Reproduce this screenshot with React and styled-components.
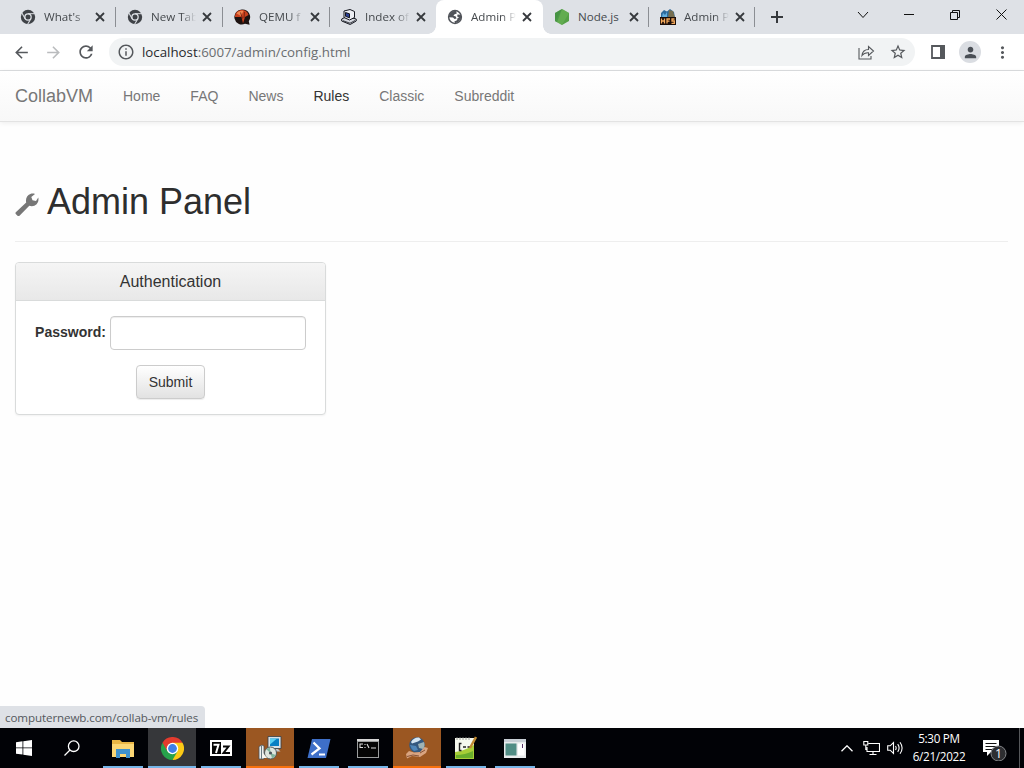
import React from 'react';
import styled, { createGlobalStyle, css } from 'styled-components';
import { MdArrowBack, MdArrowForward, MdRefresh, MdInfoOutline, MdStarBorder, MdPerson, MdMoreVert } from 'react-icons/md';

const Global = createGlobalStyle`
  *, *::before, *::after { box-sizing: border-box; }
  body { margin: 0; background: #fff; overflow: hidden; }
  svg { display: block; flex: none; }
`;

const uiFont = css`font-family: 'Open Sans', 'Noto Sans', sans-serif;`;
const pageFont = css`font-family: 'Liberation Sans', Arial, sans-serif;`;

const Screen = styled.div`
  width: 1024px; height: 768px;
  display: flex; flex-direction: column;
  overflow: hidden;
`;

/* Browser chrome */
const TabStrip = styled.div`
  height: 34px; flex: none;
  display: flex; align-items: stretch;
  padding-left: 9px;
  background: #dee1e6;
  color: #45494d;
`;
const Tab = styled.div`
  position: relative;
  width: ${p => p.$w}px; flex: none;
  display: flex; align-items: center;
  padding-left: 11px;
  ${uiFont}
  font-size: 12px;
  ${p => p.$active && css`
    background: #fff;
    border-radius: 8px 8px 0 0;
    &::before, &::after {
      content: ''; position: absolute; bottom: 0; width: 8px; height: 8px;
    }
    &::before { left: -8px; background: radial-gradient(circle at 0 0, transparent 7.5px, #fff 8px); }
    &::after { right: -8px; background: radial-gradient(circle at 100% 0, transparent 7.5px, #fff 8px); }
  `}
`;
const TabTitle = styled.span`
  width: 46px; margin-left: 8px;
  white-space: nowrap;
  line-height: 18px;
  font-size: 11.6px;
  mask-image: ${p => (p.$full ? 'none' : 'linear-gradient(90deg, #000 66%, transparent 98%)')};
`;
const TabClose = styled.span`
  margin-left: 2px; width: 16px;
  display: flex; justify-content: center;
`;
const Separator = styled.i`
  margin-left: auto;
  width: 1px; height: 20px;
  background: #8b8e93;
`;
const NewTab = styled.div`
  width: 28px; margin-left: 8px; margin-right: auto;
  display: flex; align-items: center; justify-content: center;
`;
const WindowButton = styled.div`
  width: 46px; height: 29px;
  display: flex; align-items: center; justify-content: center;
  color: #111;
`;

const Toolbar = styled.div`
  height: 37px; flex: none;
  display: flex; align-items: center;
  padding: 0 11px 0 12px;
  background: #fff;
  border-bottom: 1px solid #dcdee0;
  color: #55585c;
`;
const ToolIcon = styled.span`
  width: ${p => p.$w || 32}px;
  display: flex;
  justify-content: ${p => (p.$center ? 'center' : 'flex-start')};
  color: ${p => p.$color || 'inherit'};
`;
const Omnibox = styled.div`
  width: 806px; height: 28px; margin-left: 1px;
  display: flex; align-items: center;
  padding: 0 8px;
  border-radius: 14px;
  background: #f1f3f4;
`;
const Url = styled.span`
  flex: 1; margin-left: 7px;
  ${uiFont}
  font-size: 13.3px; line-height: 20px;
  color: #6a6d70;
  b { font-weight: 400; color: #27292c; }
`;
const Avatar = styled.span`
  width: 22px; height: 22px; border-radius: 50%;
  display: flex; align-items: center; justify-content: center;
  background: #dadde2; color: #4a4f56;
  margin-left: -1px; margin-right: 12px;
`;

/* Web page */
const Page = styled.div`
  flex: 1; min-height: 0;
  display: flex; flex-direction: column;
  ${pageFont}
  font-size: 14px; line-height: 20px; color: #333;
  background: #fefefe;
`;
const Navbar = styled.nav`
  height: 51px; flex: none;
  display: flex; align-items: center;
  padding: 0 0 1px 15px;
  background: linear-gradient(#fff, #f8f8f8);
  border-bottom: 1px solid #e3e3e3;
  box-shadow: 0 1px 5px rgba(0, 0, 0, .075);
`;
const Brand = styled.a`
  width: 78px; margin-right: 15px;
  font-size: 18px; color: #777;
  white-space: nowrap;
`;
const NavLink = styled.a`
  padding: 0 15px;
  color: ${p => (p.$hover ? '#333' : '#777')};
`;
const Content = styled.main`
  flex: 1;
  padding: 60px 16px 0 15px;
`;
const PageHeader = styled.header`
  display: flex; align-items: flex-start;
  height: 60px;
  border-bottom: 1px solid #eee;
`;
const Title = styled.h1`
  margin: 0 0 0 8px;
  font-size: 36px; line-height: 40px; font-weight: 400; color: #2e2e2e;
`;
const WrenchBox = styled.span`
  padding-top: 10px; color: #777;
`;
const Panel = styled.section`
  width: 311px; height: 153px; margin-top: 20px;
  border: 1px solid #d9dbdb; border-radius: 4px;
  background: #fff;
  box-shadow: 0 1px 2px rgba(0, 0, 0, .05);
`;
const PanelHeading = styled.h3`
  margin: 0; height: 38px;
  font-size: 16px; line-height: 37px; font-weight: 400; text-align: center;
  background: linear-gradient(#f5f5f5, #e8e8e8);
  border-bottom: 1px solid #d9dbdb;
  border-radius: 3px 3px 0 0;
`;
const Form = styled.form`
  display: flex; flex-direction: column; align-items: center; gap: 15px;
  padding-top: 15px;
`;
const Field = styled.label`
  display: flex; align-items: flex-start; gap: 4px;
  font-weight: 700; line-height: 32px;
`;
const Input = styled.input`
  width: 196px; height: 34px;
  border: 1px solid #ccc; border-radius: 4px;
  background: #fff;
  box-shadow: inset 0 1px 1px rgba(0, 0, 0, .075);
`;
const Submit = styled.button`
  width: 69px; height: 34px; padding: 0 0 1px;
  ${pageFont}
  font-size: 14px; color: #333;
  border: 1px solid #ccc; border-radius: 4px;
  background: linear-gradient(#fff, #e2e2e2);
  box-shadow: inset 0 1px 0 rgba(255, 255, 255, .15), 0 1px 1px rgba(0, 0, 0, .075);
`;
const StatusBubble = styled.div`
  width: 205px; height: 22px; padding-left: 5px;
  ${uiFont}
  font-size: 11.6px; line-height: 23px; color: #54585c;
  letter-spacing: -0.1px;
  white-space: nowrap;
  background: #dee1e6;
  border-radius: 0 4px 0 0;
`;

/* Taskbar */
const Taskbar = styled.footer`
  height: 40px; flex: none;
  display: flex;
  background: #010206;
  color: #fff;
`;
const SystemButton = styled.div`
  width: 48px;
  display: flex; align-items: center; justify-content: center;
`;
const Apps = styled.div`
  display: flex; gap: 1px;
  margin-left: 3px; margin-right: auto;
`;
const AppButton = styled.div`
  width: 48px;
  display: flex; align-items: center; justify-content: center;
  background:
    linear-gradient(${p => (p.$tone === 'alert' ? '#f8700c, #f8700c' : '#76b5e8, #76b5e8')})
    bottom / ${p => (p.$tone ? '48px' : '40px')} 2px no-repeat,
    ${p => ({ alert: '#9b5722', active: '#36373a' }[p.$tone] || 'transparent')};
`;
const TrayItem = styled.div`
  width: 24px;
  display: flex; align-items: center; justify-content: center;
`;
const Clock = styled.div`
  width: 64px; padding-top: 1px;
  ${uiFont}
  font-size: 11.7px; line-height: 18px; text-align: center;
  letter-spacing: -0.3px;
  white-space: nowrap;
`;
const Notifications = styled.div`
  width: 49px; padding-left: 11px;
  display: flex; align-items: center;
  border-right: 1px solid #55575a;
  margin-right: 4px;
`;

const XIcon = () => (
  <svg width="10" height="10" viewBox="0 0 10 10" stroke="#36393d" strokeWidth="1.8"><path d="M1 1l8 8M9 1l-8 8" /></svg>
);

const Wrench = () => (
  <svg width="24" height="24" viewBox="0 0 24 24" fill="currentColor">
    <path d="M.8 20.200L11.200 10.400C10.300 6.800 12 3.300 15.300 2c1.700-.7 3.400-.6 4.700-.1L16.300 5l1.200 3.300 3.500.6 2.300-3.300c.5 2.600-.1 5-1.700 6.600-2 1.900-4.700 2.400-7.300 1.500L4.500 23.800c-.6.6-1.400.6-2 0L.8 22c-.5-.5-.5-1.300 0-1.800z" />
  </svg>
);

const DarkChrome = () => (
  <svg width="16" height="16" viewBox="0 0 16 16">
    <circle cx="8" cy="8" r="7.200" fill="#3f4247" />
    <circle cx="8" cy="8" r="3.800" fill="#dee1e6" />
    <circle cx="8" cy="8" r="2.500" fill="#3f4247" />
    <g stroke="#dee1e6" strokeWidth="1">
      <path d="M8 4.700h7" /><path d="M8 4.700h7" transform="rotate(120 8 8)" /><path d="M8 4.700h7" transform="rotate(240 8 8)" />
    </g>
  </svg>
);
const GlobeTab = () => (
  <svg width="16" height="16" viewBox="0 0 16 16">
    <circle cx="8" cy="8" r="6.400" fill="#fff" stroke="#505359" strokeWidth="1.500" />
    <path d="M9 1.800C5 1.500 2 4.500 1.800 8.200L6 8.600l1.500 1.300 2-.4L8.800 7.600 6.400 6.800 7.600 5.200l2.200-.6z" fill="#505359" />
    <path d="M10.500 5.500l3.500.2.300 3.300-2.800 3.800-3.200 1.500-1-1.800 2.700-1.300.6-2.200 1.600-.6-2-1z" fill="#505359" />
  </svg>
);
const QemuIcon = () => (
  <svg width="17" height="16" viewBox="0 0 17 16">
    <path d="M8 .5a7.500 7.500 0 1 0 3 14.300l4.600 1-.8-3.600A7.500 7.500 0 0 0 8 .5z" fill="#1d1210" />
    <path d="M1 8C.8 3.500 4.300 1 8 1c3.600 0 6 2.300 6.500 5L11 8l-2 6.500L7.500 8z" fill="#c8401d" />
    <path d="M2.500 4.500C4 2 7 1.300 9.500 2L7 7z" fill="#f0854f" />
    <path d="M6.500 3.500l2 6M10.500 3l-.5 6" stroke="#6a1e10" strokeWidth=".8" />
  </svg>
);
const ComputerIcon = () => (
  <svg width="16" height="16" viewBox="0 0 16 16" stroke="#14161e" strokeLinejoin="round">
    <path d="M.7 10l5-2.500 9.500 2.500v2l-6 3.500-8.500-3.500z" fill="#d7dae2" />
    <path d="M3 2l6-1.500 4.500 2v6l-5 2.500L3 8.500z" fill="#eceef3" />
    <path d="M4.500 3.500l4 1.300v4l-4-1.500z" fill="#2b3f94" />
    <path d="M2 11.700l7 2.500 5-2.700" fill="none" strokeWidth=".8" />
  </svg>
);
const NodeIcon = () => (
  <svg width="16" height="16" viewBox="0 0 16 16">
    <path d="M8 0l7 4v8l-7 4-7-4V4z" fill="#54a045" />
    <path d="M8 0l7 4-7 12-7-4z" fill="#6db75a" opacity=".55" />
    <path d="M8 0L1 4v8l2 1.200z" fill="#3d8a42" opacity=".6" />
  </svg>
);
const HfsIcon = () => (
  <svg width="16" height="16" viewBox="0 0 16 16">
    <path d="M1 9V4l3-3 3 1.500L10 0l4 3 1 6z" fill="#2d6a9c" />
    <path d="M9 1l4 1 2 7H8z" fill="#766e4f" /><path d="M3 4l2 2 2-3v5H2z" fill="#63aede" />
    <path d="M0 8h16v8H0z" fill="#1b0d08" />
    <path d="M1.500 9.500v5M4.500 9.500v5M1.500 12h3M7 14.500v-4.500h3M7 12.200h2.500M14.500 10h-2.500v2h2.300v2.300h-2.800" fill="none" stroke="#f7ab5c" strokeWidth="1.300" />
  </svg>
);

const tabs = [
  { title: "What's", icon: <DarkChrome />, w: 107 },
  { title: 'New Tab', icon: <DarkChrome />, w: 107 },
  { title: 'QEMU f', icon: <QemuIcon />, w: 107 },
  { title: 'Index of', icon: <ComputerIcon />, w: 106 },
  { title: 'Admin P', icon: <GlobeTab />, active: true, w: 107 },
  { title: 'Node.js', icon: <NodeIcon />, full: true, w: 106 },
  { title: 'Admin P', icon: <HfsIcon />, w: 106 },
];

const Folder = () => (
  <svg width="22" height="19" viewBox="0 0 22 19">
    <path d="M0 1h8l2 2h12v15H0z" fill="#e9b746" /><path d="M0 5h22v13H0z" fill="#fbd775" />
    <path d="M4 10h14v9h-4v-4H8v4H4z" fill="#3f92cd" />
  </svg>
);
const ChromeColor = () => (
  <svg width="23" height="23" viewBox="0 0 24 24">
    <path d="M12 12L1.600 6A12 12 0 0 1 22.400 6z" fill="#e33b2e" />
    <path d="M12 12L22.400 6A12 12 0 0 1 12 24z" fill="#fbc916" />
    <path d="M12 12v12A12 12 0 0 1 1.600 6z" fill="#27a24b" />
    <path d="M12 6h10.400l-5.200 9z" fill="#fbc916" /><path d="M17.200 15L12 24l-5.200-9z" fill="#27a24b" /><path d="M1.600 6L6.800 15 12 6z" fill="#e33b2e" />
    <circle cx="12" cy="12" r="6" fill="#fff" /><circle cx="12" cy="12" r="4.600" fill="#3f7fe8" />
  </svg>
);
const SevenZip = () => (
  <svg width="22" height="16" viewBox="0 0 22 16">
    <path d="M0 0h22v16H0z" fill="#fff" /><path d="M2 2h9v12H2z" fill="#050505" />
    <path d="M3.500 4.700h5L6 13" fill="none" stroke="#fff" strokeWidth="2" />
    <path d="M13 6.500h5.500l-5 6.500H20" fill="none" stroke="#080808" strokeWidth="2" />
  </svg>
);
const Installer = () => (
  <svg width="24" height="24" viewBox="0 0 24 24">
    <path d="M10 .5h13v12H10z" fill="#d9e0e4" stroke="#333d46" strokeWidth=".8" /><path d="M12 2.500h9v7.500h-9z" fill="#087fc3" /><path d="M12 2.500h7l-7 6z" fill="#5bd0f2" />
    <path d="M14 13h6l2.500 2.500H13z" fill="#c1c6c9" />
    <path d="M1 10.500l3-1.500 2 1v13H1z" fill="#eef0ee" stroke="#47525a" strokeWidth=".8" /><path d="M3.500 10v13" stroke="#667b82" />
    <circle cx="12.500" cy="17" r="6" fill="#dfe6df" stroke="#4e5a5c" /><path d="M12.500 17L8.500 13.500A5.500 5.500 0 0 1 12 11.700zM12.500 17l5 2a5.500 5.500 0 0 1-3.500 3.200z" fill="#7eb59c" />
    <circle cx="12.500" cy="17" r="1.600" fill="#4a545c" />
    <path d="M5 17l4 5H4z" fill="#f7f7f2" />
  </svg>
);
const PowerShell = () => (
  <svg width="24" height="19" viewBox="0 0 24 19">
    <path d="M5 0h18.500L19 19H.5z" fill="#3e6fc8" />
    <path d="M6.500 3.500l6 6-8 6M12 15.500h6" fill="none" stroke="#fff" strokeWidth="2.200" />
  </svg>
);
const Cmd = () => (
  <svg width="22" height="19" viewBox="0 0 22 19">
    <path d="M0 0h22v19H0z" fill="#9b9d9d" /><path d="M1 3h20v15H1z" fill="#050505" /><path d="M0 0h22v2H0z" fill="#d6d6d6" />
    <path d="M6 5H3v3.500h3M8 5v1M8 8v1M10 5l2 4M14 9h5" fill="none" stroke="#ddd" strokeWidth="1.100" />
  </svg>
);
const Globe = () => (
  <svg width="24" height="24" viewBox="0 0 24 24">
    <circle cx="12" cy="9" r="7.800" fill="#34597f" /><path d="M6 6q3-5 8-4.500l2 2-3 2-6 2z" fill="#d5e6f2" />
    <path d="M13 8l6-2q1.500 4-1 7l-4-1z" fill="#9fb3b4" /><path d="M5 9l6 1 2 4-4 1q-3-2-4-6z" fill="#4f86b8" />
    <path d="M1 18l3-3 5 1.500 6-.5 4.500-5 3.500 1-2 5-6 4-8-1-5 2.500z" fill="#d9a480" /><path d="M2 20.500l6-1.500 6 1M15 17l5-3" fill="none" stroke="#7d4a30" strokeWidth=".9" />
  </svg>
);
const Notepad = () => (
  <svg width="22" height="24" viewBox="0 0 22 24">
    <path d="M0 2h19v21H0z" fill="#f6f9ee" /><path d="M0 16q9-1 19-7v14H0z" fill="#a8ce37" /><path d="M1 19q9 0 17-4v7H1z" fill="#6aae2c" />
    <path d="M6.500 7.500h-2v7h2M8 11h3M12.500 11h3" fill="none" stroke="#222" strokeWidth="1.400" /><path d="M2 1v3M5 1v3M8 1v3M11 1v3M14 1v3" stroke="#8a8a8a" strokeWidth=".8" />
    <path d="M21 1l-6 11" stroke="#c08a32" strokeWidth="2.500" />
  </svg>
);
const AppWindow = () => (
  <svg width="22" height="19" viewBox="0 0 22 19">
    <path d="M0 0h22v19H0z" fill="#e8ebec" /><path d="M0 0h22v3H0z" fill="#c8cfd5" /><path d="M1.500 4.500h11v12h-11z" fill="#518d85" />
    <path d="M14 4.500h6.500v12H14z" fill="#fff" /><path d="M18.500 5v4" stroke="#536" />
  </svg>
);

const apps = [
  [<Folder />], [<ChromeColor />, 'active'], [<SevenZip />], [<Installer />, 'alert'], [<PowerShell />],
  [<Cmd />], [<Globe />, 'alert'], [<Notepad />], [<AppWindow />],
];
const links = ['Home', 'FAQ', 'News', 'Rules', 'Classic', 'Subreddit'];

export default function App() {
  return (
    <Screen>
      <Global />
      <TabStrip>
        {tabs.map((t, i) => (
          <Tab key={i} $active={t.active} $w={t.w}>
            {t.icon}
            <TabTitle $full={t.full}>{t.title}</TabTitle>
            <TabClose><XIcon /></TabClose>
            {!t.active && i !== 3 && <Separator />}
          </Tab>
        ))}
        <NewTab><svg width="12" height="12" viewBox="0 0 12 12" stroke="#36393d" strokeWidth="2"><path d="M6 0v12M0 6h12" /></svg></NewTab>
        <WindowButton><svg width="12" height="8" viewBox="0 0 12 8" fill="none" stroke="currentColor"><path d="M1 1l5 5.500L11 1" /></svg></WindowButton>
        <WindowButton><svg width="10" height="1" viewBox="0 0 10 1"><path d="M0 0h10v1H0z" fill="currentColor" /></svg></WindowButton>
        <WindowButton><svg width="10" height="10" viewBox="0 0 10 10" fill="none" stroke="currentColor"><path d="M.5 2.500h7v7h-7zM2.500 2.500v-2h7v7h-2" /></svg></WindowButton>
        <WindowButton><svg width="11" height="11" viewBox="0 0 11 11" stroke="currentColor"><path d="M.5 .5l10 10M10.500 .5l-10 10" /></svg></WindowButton>
      </TabStrip>
      <Toolbar>
        <ToolIcon><MdArrowBack size={19} /></ToolIcon>
        <ToolIcon $color="#babcbe"><MdArrowForward size={19} /></ToolIcon>
        <ToolIcon><MdRefresh size={20} /></ToolIcon>
        <Omnibox>
          <MdInfoOutline size={18} />
          <Url><b>localhost</b>:6007/admin/config.html</Url>
          <ToolIcon $w={31}>
            <svg width="17" height="15" viewBox="0 0 17 15" fill="none" stroke="currentColor" strokeWidth="1.100"><path d="M1 3v11h12v-3M4 10.500C4.500 6.500 7 4.500 10.500 4.500V1.500L15.500 6l-5 4.500V7.800C7.500 7.600 5.500 8.500 4 10.500z" /></svg>
          </ToolIcon>
          <MdStarBorder size={18} />
        </Omnibox>
        <ToolIcon $w={45} $center>
          <svg width="14" height="14" viewBox="0 0 14 14"><path d="M1 1h12v12H1z" fill="none" stroke="currentColor" strokeWidth="1.800" /><path d="M9 0h5v14H9z" fill="currentColor" /></svg>
        </ToolIcon>
        <Avatar><MdPerson size={17} /></Avatar>
        <MdMoreVert size={19} />
      </Toolbar>
      <Page>
        <Navbar>
          <Brand>CollabVM</Brand>
          {links.map(l => <NavLink key={l} $hover={l === 'Rules'}>{l}</NavLink>)}
        </Navbar>
        <Content>
          <PageHeader>
            <WrenchBox><Wrench /></WrenchBox>
            <Title>Admin Panel</Title>
          </PageHeader>
          <Panel>
            <PanelHeading>Authentication</PanelHeading>
            <Form onSubmit={e => e.preventDefault()}>
              <Field>Password:<Input type="password" /></Field>
              <Submit>Submit</Submit>
            </Form>
          </Panel>
        </Content>
        <StatusBubble>computernewb.com/collab-vm/rules</StatusBubble>
      </Page>
      <Taskbar>
        <SystemButton>
          <svg width="16" height="16" viewBox="0 0 16 16" fill="#fff"><path d="M0 2.200l6.500-.9v6.200H0zM7.300 1.200L16 0v7.500H7.300zM0 8.300h6.500v6.300L0 13.700zM7.300 8.300H16V16l-8.700-1.200z" /></svg>
        </SystemButton>
        <SystemButton>
          <svg width="16" height="16" viewBox="0 0 16 16" fill="none" stroke="#fff" strokeWidth="1.300"><circle cx="9.700" cy="6.200" r="5.300" /><path d="M6 10L.5 15.500" /></svg>
        </SystemButton>
        <Apps>
          {apps.map(([icon, tone], i) => <AppButton key={i} $tone={tone}>{icon}</AppButton>)}
        </Apps>
        <TrayItem><svg width="12" height="7" viewBox="0 0 12 7" fill="none" stroke="#fff" strokeWidth="1.300"><path d="M.5 6.200L6 .8l5.500 5.400" /></svg></TrayItem>
        <TrayItem>
          <svg width="17" height="16" viewBox="0 0 17 16" fill="none" stroke="#fff" strokeWidth="1.100"><path d="M5.500 3.500h11v8H4V7M10 11.500v3M6.500 14.500h7M.8 1.500h4v3.500h-4zM2.800 5v4.500H4" /></svg>
        </TrayItem>
        <TrayItem>
          <svg width="17" height="14" viewBox="0 0 17 14" fill="none" stroke="#fff" strokeWidth="1.100"><path d="M.7 4.800h2.500L6.500 1.500v11L3.200 9.200H.7zM8.500 5q1.300 2 0 4M10.700 3.200q2.800 3.800 0 7.600M13 1.200q4.200 5.800 0 11.600" /></svg>
        </TrayItem>
        <Clock>5:30 PM<br />6/21/2022</Clock>
        <Notifications>
          <svg width="26" height="26" viewBox="0 0 26 26">
            <path d="M1 5h16v12H9l-4 4v-4H1z" fill="#fff" /><path d="M3.500 8.500h11M3.500 11.500h11M3.500 14.500h7" stroke="#111" />
            <circle cx="16.500" cy="18.500" r="7.500" fill="#2d2e31" stroke="#84868a" />
            <text x="16.500" y="23" textAnchor="middle" fontFamily="Open Sans, sans-serif" fontSize="12.500" fill="#fff">1</text>
          </svg>
        </Notifications>
      </Taskbar>
    </Screen>
  );
}
